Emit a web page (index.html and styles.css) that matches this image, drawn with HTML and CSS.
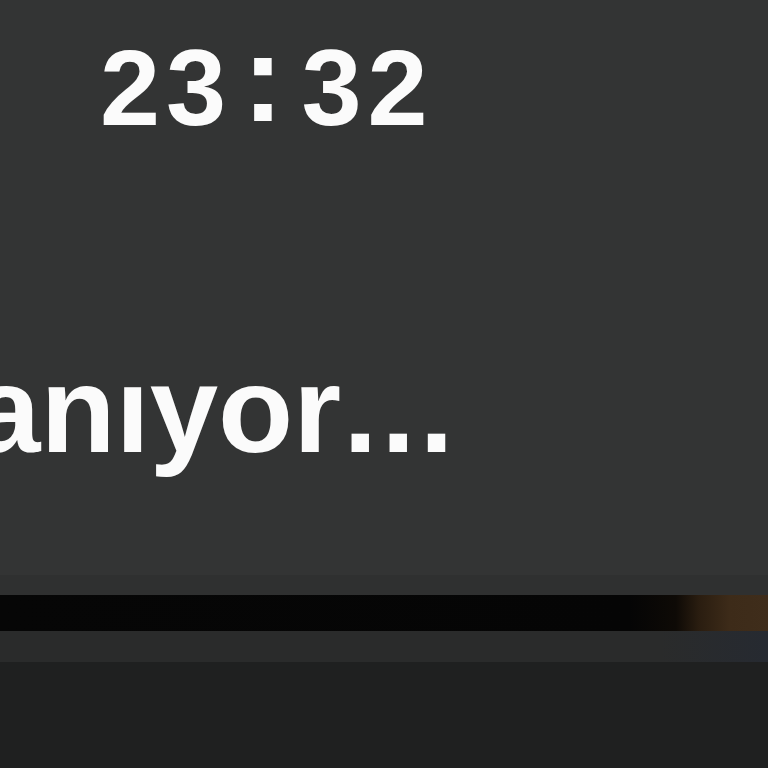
FILE: index.html
```html
<!DOCTYPE html>
<html lang="tr">
<head>
<meta charset="utf-8">
<link rel="stylesheet" href="styles.css">
</head>
<body>
<div class="screen">
  <div class="clock">23<span class="colon">:</span>32</div>
  <div class="status">anıyor<span class="dots">...</span></div>
  <div class="spacer"></div>
  <div class="dock">
    <div class="strip strip-top"></div>
    <div class="strip strip-bar"></div>
    <div class="strip strip-under"></div>
    <div class="strip strip-base"></div>
  </div>
</div>
</body>
</html>
```
FILE: styles.css
```css
html, body {
  margin: 0;
  padding: 0;
  background: #333333;
}
.screen {
  width: 768px;
  height: 768px;
  overflow: hidden;
  display: flex;
  flex-direction: column;
  background: #333434;
  font-family: "Liberation Sans", Arial, sans-serif;
  color: #fbfbfb;
}
.clock {
  padding: 34px 0 0 100px;
  font-size: 108px;
  font-weight: bold;
  line-height: 1;
  letter-spacing: 6px;
  white-space: nowrap;
}
.colon {
  display: inline-block;
  font-size: 124px;
  line-height: 0.7;
  vertical-align: 4px;
  margin: 0 12px 0 10px;
}
.status {
  margin: 206px 0 0 -28px;
  font-size: 123px;
  font-weight: bold;
  line-height: 1;
  white-space: nowrap;
}
.dots {
  letter-spacing: 4px;
  margin-left: 2px;
}
.spacer {
  flex: 1;
}
.dock {
  display: flex;
  flex-direction: column;
}
.strip-top {
  height: 20px;
  background: #2f3030;
}
.strip-bar {
  height: 36px;
  background: linear-gradient(to right, #060606 0%, #050505 82%, #0e0a06 88%, #2a1d10 91%, #3d2b19 95%, #3f2d1b 100%);
}
.strip-under {
  height: 31px;
  background: linear-gradient(to right, #2a2b2b 0%, #2a2b2b 86%, #262a31 100%);
}
.strip-base {
  height: 106px;
  background: #1f2020;
}
```
